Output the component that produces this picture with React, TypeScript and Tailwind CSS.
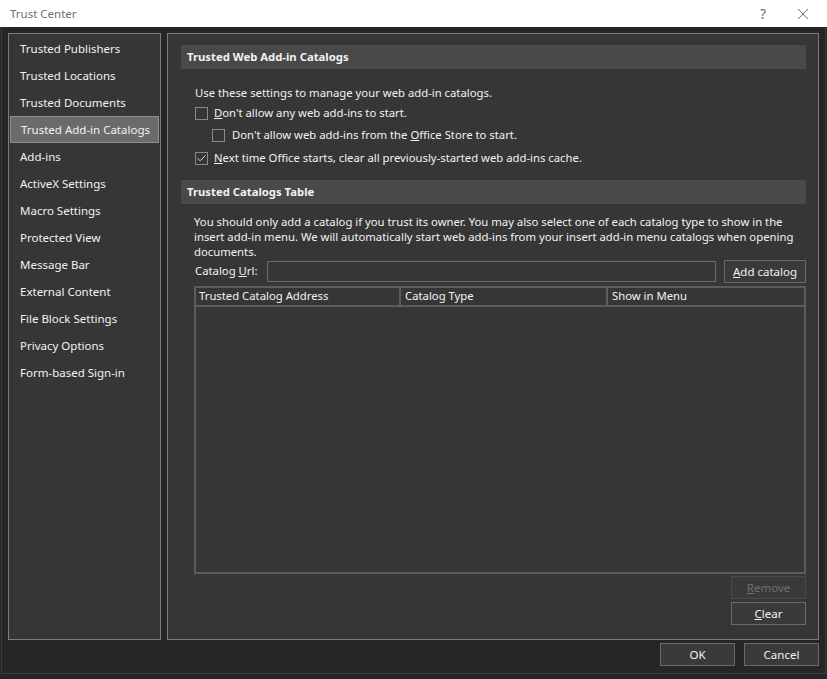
import { Check } from "lucide-react";

const navItems = [
    "Trusted Publishers",
    "Trusted Locations",
    "Trusted Documents",
    "Trusted Add-in Catalogs",
    "Add-ins",
    "ActiveX Settings",
    "Macro Settings",
    "Protected View",
    "Message Bar",
    "External Content",
    "File Block Settings",
    "Privacy Options",
    "Form-based Sign-in",
];

function CheckBox({ checked }: { checked?: boolean }) {
    return (
        <span className="w-[13px] h-[13px] border border-[#8a8a8a] bg-[#363636] flex items-center justify-center shrink-0">
            {checked && <Check size={11} strokeWidth={2} className="text-[#e8e8e8]" />}
        </span>
    );
}

function SectionHeader({ title }: { title: string }) {
    return (
        <div className="h-[24px] bg-[#494949] flex items-center px-[6px] font-bold text-[11.3px] text-[#f2f2f2]">
            {title}
        </div>
    );
}

function DialogButton({ children, disabled, className }: { children: React.ReactNode; disabled?: boolean; className?: string }) {
    return (
        <button
            disabled={disabled}
            className={`h-[23px] border flex items-center justify-center text-[11.5px] ${
                disabled ? "border-[#4a4a4a] bg-[#3a3a3a] text-[#6e6e6e]" : "border-[#6a6a6a] bg-[#3a3a3a] text-[#f2f2f2]"
            } ${className ?? ""}`}
        >
            {children}
        </button>
    );
}

export default function App() {
    return (
        <div
            className="w-[827px] h-[679px] bg-[#262626] text-[#f2f2f2] flex flex-col overflow-hidden"
            style={{ fontFamily: '"Noto Sans", "Open Sans", sans-serif' }}
        >
            <div className="h-[27px] bg-white flex items-center shrink-0 text-[#707070] text-[11.5px]">
                <span className="pl-[10px] flex-1">Trust Center</span>
                <span className="w-[24px] text-center text-[14px] mr-[22px]">?</span>
                <svg width="12" height="12" viewBox="0 0 12 12" className="mr-[18px]">
                    <path d="M1 1 L11 11 M11 1 L1 11" stroke="#707070" strokeWidth="1" />
                </svg>
            </div>

            <div className="flex-1 mx-[1px] mb-[5px] border-x border-b border-[#3c3c3c] flex flex-col px-[6px] pt-[6px]">
                <div className="flex gap-[6px] h-[607px]">
                    {/* left navigation */}
                    <div className="w-[153px] border border-[#7c7c7c] bg-[#363636] pt-[1px] px-px">
                        {navItems.map((item) => (
                            <div
                                key={item}
                                className={`h-[27px] flex items-center pl-[10px] text-[11.5px] ${
                                    item === "Trusted Add-in Catalogs" ? "bg-[#6b6b6b] border border-[#8e8e8e] pl-[9px]" : ""
                                }`}
                            >
                                {item}
                            </div>
                        ))}
                    </div>

                    {/* settings panel */}
                    <div className="flex-1 border border-[#7c7c7c] bg-[#363636] pl-[13px] pr-[12px] pt-[11px] flex flex-col">
                        <SectionHeader title="Trusted Web Add-in Catalogs" />
                        <div className="pl-[14px] pt-[17px] text-[11.3px] flex flex-col">
                            <div className="h-[15px] flex items-center">Use these settings to manage your web add-in catalogs.</div>
                            <div className="h-[21px] mt-[2px] flex items-center gap-[6px]">
                                <CheckBox />
                                <span>
                                    <u>D</u>on't allow any web add-ins to start.
                                </span>
                            </div>
                            <div className="h-[22px] flex items-center gap-[7px] pl-[17px]">
                                <CheckBox />
                                <span>
                                    Don't allow web add-ins from the <u>O</u>ffice Store to start.
                                </span>
                            </div>
                            <div className="h-[24px] flex items-center gap-[6px]">
                                <CheckBox checked />
                                <span>
                                    <u>N</u>ext time Office starts, clear all previously-started web add-ins cache.
                                </span>
                            </div>
                        </div>

                        <div className="mt-[10px]">
                            <SectionHeader title="Trusted Catalogs Table" />
                        </div>
                        <div className="pl-[13px] pt-[10px] text-[11.3px] leading-[15px] pr-[4px]">
                            You should only add a catalog if you trust its owner. You may also select one of each catalog type to show in the
                            insert add-in menu. We will automatically start web add-ins from your insert add-in menu catalogs when opening
                            documents.
                        </div>
                        <div className="flex items-center mt-[1px] pl-[14px] h-[23px]">
                            <span className="text-[11.3px] w-[72px]">
                                Catalog <u>U</u>rl:
                            </span>
                            <div className="w-[449px] h-[21px] border border-[#6a6a6a] bg-[#363636]" />
                            <DialogButton className="ml-auto w-[82px]">
                                <span>
                                    <u>A</u>dd catalog
                                </span>
                            </DialogButton>
                        </div>

                        <div className="ml-[13px] mt-[3px] h-[288px] border-2 border-[#5c5c5c] bg-[#363636] flex flex-col">
                            <div className="flex gap-[2px] h-[19px] text-[11.3px] border-b-2 border-[#5c5c5c]">
                                <div className="w-[205px] border-r-2 border-[#5c5c5c] pl-[3px] flex items-center">Trusted Catalog Address</div>
                                <div className="w-[205px] border-r-2 border-[#5c5c5c] pl-[2px] flex items-center">Catalog Type</div>
                                <div className="flex-1 pl-[2px] flex items-center">Show in Menu</div>
                            </div>
                        </div>

                        <div className="flex flex-col items-end gap-[3px] mt-[2px]">
                            <DialogButton disabled className="w-[75px]">
                                <span>
                                    <u>R</u>emove
                                </span>
                            </DialogButton>
                            <DialogButton className="w-[75px]">
                                <span>
                                    <u>C</u>lear
                                </span>
                            </DialogButton>
                        </div>
                    </div>
                </div>

                <div className="flex justify-end gap-[9px] mt-[3px]">
                    <DialogButton className="w-[75px]">OK</DialogButton>
                    <DialogButton className="w-[75px]">Cancel</DialogButton>
                </div>
            </div>
        </div>
    );
}
